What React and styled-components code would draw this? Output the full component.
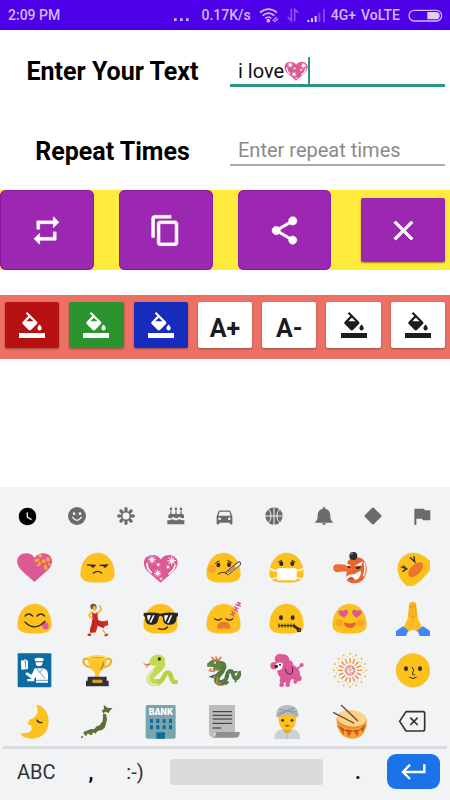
import React, { useState } from 'react'
import styled, { createGlobalStyle } from 'styled-components'
import {
  MdRepeat,
  MdContentCopy,
  MdShare,
  MdClose,
  MdWatchLater,
  MdDirectionsCar
} from 'react-icons/md'



const GlobalStyle = createGlobalStyle`
  * {
    box-sizing: border-box;
  }

  body {
    margin: 0;
    background: #fff;
    color: #000;
    font-family: Roboto, 'Noto Sans', sans-serif;
  }

  button, input {
    font-family: inherit;
  }

  button {
    border: 0;
    padding: 0;
    cursor: pointer;
  }
`

const Page = styled.div`
  min-height: 100vh;
  display: flex;
  flex-direction: column;
`

const StatusBar = styled.header`
  height: 30px;
  padding: 0 7px 0 8px;
  display: flex;
  align-items: center;
  justify-content: space-between;
  background: #4d00e8;
  color: #d3b9fb;
  font-size: 14px;
  font-weight: 500;
`

const StatusGroup = styled.div`
  display: flex;
  align-items: center;
  gap: ${props => props.$gap}px;

  svg {
    display: block;
  }
`

const Form = styled.form`
  display: flex;
  flex-direction: column;
`

const FormRow = styled.div`
  height: 80px;
  display: grid;
  grid-template-columns: 1fr 1fr;
  align-items: center;
`

const Label = styled.label`
  text-align: center;
  font-size: 25px;
  line-height: 30px;
  font-weight: bold;
  padding-top: 3px;
`

const Field = styled.div`
  height: 34px;
  margin: 0 5px;
  padding: 4px 8px 0;
  display: flex;
  align-items: center;
  align-self: end;
  margin-bottom: ${props => props.$active ? 23 : 24}px;
  border-bottom: ${props => props.$active ? '3px solid #2a9485' : '2px solid #aaa'};
`

const TextInput = styled.input`
  field-sizing: ${props => props.$fit ? 'content' : 'fixed'};
  width: ${props => props.$fit ? 'auto' : '100%'};
  border: 0;
  outline: 0;
  padding: 0;
  background: transparent;
  color: #111;
  font-size: 20px;
  line-height: 28px;

  &::placeholder {
    color: #8a8a8a;
    opacity: 1;
  }
`

const Caret = styled.span`
  width: 2px;
  height: 27px;
  background: #2a9485;
`

const Actions = styled.div`
  height: 80px;
  display: grid;
  grid-template-columns: repeat(4, 1fr);
  gap: 25px;
  background: #ffeb3b;
`

const ActionButton = styled.button`
  display: flex;
  align-items: center;
  justify-content: center;
  margin: ${props => props.$inset ? '8px 5px' : '0'};
  border-radius: ${props => props.$inset ? 2 : 6}px;
  background: #9c27b0;
  color: #fff;
  font-size: 33px;
  box-shadow: ${props => props.$inset ? '0 1px 2px rgba(0, 0, 0, .4)' : 'inset 0 0 0 1px #8d1aa2'};

  path:not([fill='none']) {
    stroke: currentColor;
    stroke-width: .5px;
  }
`

const Tools = styled.div`
  height: 64px;
  margin-top: 25px;
  padding: 7px 5px 11px;
  display: grid;
  grid-template-columns: repeat(7, 1fr);
  gap: 10px;
  background: #ec7063;
`

const ToolButton = styled.button`
  display: flex;
  align-items: center;
  justify-content: center;
  border-radius: 2px;
  background: ${props => props.$bg || '#fff'};
  color: ${props => props.$bg ? '#fff' : '#1c1c1c'};
  font-size: 25px;
  line-height: 28px;
  font-weight: bold;
  padding-top: ${props => props.$text ? 7 : 0}px;
  box-shadow: 0 1px 2px rgba(0, 0, 0, .35);
`

const Keyboard = styled.section`
  margin-top: auto;
  background: #f1f3f5;
`

const Tabs = styled.div`
  height: 56px;
  padding: 2px 3px 0;
  display: grid;
  grid-template-columns: repeat(9, 1fr);
`

const TabButton = styled.button`
  display: flex;
  align-items: center;
  justify-content: center;
  background: transparent;
  color: ${props => props.$active ? '#000' : '#6b6b6b'};
  font-size: 21px;
`

const EmojiGrid = styled.div`
  padding: 8px 6px 7px 3px;
  display: grid;
  grid-template-columns: repeat(7, 1fr);
  row-gap: 16px;
`

const EmojiButton = styled.button`
  height: 35px;
  display: flex;
  justify-content: center;
  background: transparent;
`

const Divider = styled.hr`
  height: 3px;
  margin: 0 3px;
  border: 0;
  background: #dadcdf;
`

const BottomRow = styled.div`
  height: 51px;
  padding: 0 10px 6px 17px;
  display: flex;
  align-items: center;
`

const KeyButton = styled.button`
  width: ${props => props.$width}px;
  margin-right: ${props => props.$gap || 0}px;
  flex-shrink: 0;
  background: transparent;
  color: ${props => props.$dark ? '#000' : '#303134'};
  font-size: 20px;
  line-height: 24px;
  font-weight: ${props => props.$dark ? 'bold' : 'normal'};
`

const SpaceKey = styled.button`
  flex: 1;
  height: 26px;
  margin-right: 25px;
  border-radius: 3px;
  background: #d9dadc;
`

const EnterKey = styled.button`
  width: 53px;
  height: 35px;
  flex-shrink: 0;
  display: flex;
  align-items: center;
  justify-content: center;
  border-radius: 9px;
  background: #1a73e8;
`



const YELLOW = '#fcc21b'
const INK = '#2f2a20'
const PINK = '#db5a96'
const KEYBOARD_BG = '#f1f3f5'

const FillIcon = () => (
  <svg width="26" height="26" viewBox="0 0 24 24" fill="currentColor">
    <path d="M16.56 8.94 7.62 0 6.21 1.41l2.38 2.38-5.15 5.15a1.49 1.49 0 0 0 0 2.12l5.5 5.5c.29.29.68.44 1.06.44s.77-.15 1.06-.44l5.5-5.5c.59-.58.59-1.53 0-2.12zM6.8 8.6 10 5.21 13.4 8.6zM19 11.5s-2 2.17-2 3.5c0 1.1.9 2 2 2s2-.9 2-2c0-1.33-2-3.5-2-3.5z" />
    <path d="M0 19.4h24V24H0z" />
  </svg>
)

const WifiIcon = () => (
  <svg width="20" height="16" viewBox="0 0 60 48" fill="none" stroke="#d3b9fb" strokeWidth="5">
    <path d="M3 17Q28-4 54 17M11 26Q28 11 46 26M19 34Q28 26 37 34" />
    <circle cx="28" cy="41" r="3" fill="#d3b9fb" />
    <path d="M41 42l12-12M46 45l11-10" strokeWidth="4" stroke="#b597f3" />
  </svg>
)

const DataIcon = () => (
  <svg width="12" height="14" viewBox="0 0 36 42" fill="none" stroke="#8a55ee" strokeWidth="5">
    <path d="M13 2v36L2 27M23 40V4l11 11" />
  </svg>
)

const SignalIcon = () => (
  <svg width="19" height="14" viewBox="0 0 57 42">
    <path d="M1 36h6v6H1zM12 31h6v11h-6zM23 24h6v18h-6z" fill="#e2d0fd" />
    <path d="M34 14h6v28h-6zM48 3h6v39h-6z" fill="#7d45ec" />
  </svg>
)

const BatteryIcon = () => (
  <svg width="35" height="13" viewBox="0 0 105 39">
    <rect x="3" y="4" width="98" height="32" rx="16" fill="none" stroke="#d3b9fb" strokeWidth="4" />
    <path d="M58 9h26q11 0 11 11t-11 11H58z" fill="#dfccfc" />
  </svg>
)

const EnterIcon = () => (
  <svg width="25" height="17" viewBox="0 0 75 51" fill="none" stroke="#fff" strokeWidth="7">
    <path d="M70 4v23H7M27 5 6 27l21 21" />
  </svg>
)

const FaceTab = () => (
  <svg width="18" height="18" viewBox="0 0 54 54">
    <circle cx="27" cy="27" r="27" fill="currentColor" />
    <circle cx="18" cy="20" r="4" fill={KEYBOARD_BG} />
    <circle cx="36" cy="20" r="4" fill={KEYBOARD_BG} />
    <path d="M14 31q13 18 26 0" fill="none" stroke={KEYBOARD_BG} strokeWidth="4" strokeLinecap="round" />
  </svg>
)

const FlowerTab = () => (
  <svg width="18" height="18" viewBox="0 0 54 54">
    {[0, 45, 90, 135, 180, 225, 270, 315].map(angle => (
      <ellipse key={angle} cx="27" cy="7" rx="5" ry="7" fill="currentColor" transform={`rotate(${angle} 27 27)`} />
    ))}
    <circle cx="27" cy="27" r="13" fill="none" stroke="currentColor" strokeWidth="5" />
  </svg>
)

const CakeTab = () => (
  <svg width="18" height="18" viewBox="0 0 54 54" fill="currentColor">
    <path d="M12 0q8 8 0 11-8-3 0-11zM27 0q8 8 0 11-8-3 0-11zM42 0q8 8 0 11-8-3 0-11zM10 13h4v8h11v-8h4v8h11v-8h4v8h3q4 0 4 5v6q-5 4-9 0-5-4-9 0-5 4-9 0-5-4-9 0-6 4-11 0v-6q0-5 4-5h2z" />
    <path d="M1 39q6 2 10-1 5-3 9 0 7 4 13 0 5-3 9 0 5 3 10 1v13H1z" />
  </svg>
)

const BallTab = () => (
  <svg width="18" height="18" viewBox="0 0 54 54">
    <circle cx="27" cy="27" r="26" fill="currentColor" />
    <path d="M27 0v54M0 27h54M9 5q19 22 0 44M45 5q-19 22 0 44" fill="none" stroke={KEYBOARD_BG} strokeWidth="3" />
  </svg>
)

const BellTab = () => (
  <svg width="18" height="18" viewBox="0 0 54 54" fill="currentColor">
    <path d="M27 0q4 0 4 5c11 3 15 12 15 21 0 10 2 14 7 18v3H1v-3c5-4 7-8 7-18 0-9 4-18 15-21q0-5 4-5zM21 49h12q-1 5-6 5t-6-5z" />
  </svg>
)

const DiamondTab = () => (
  <svg width="18" height="18" viewBox="0 0 54 54">
    <path d="M24 3q3-3 6 0l21 21q3 3 0 6L30 51q-3 3-6 0L3 30q-3-3 0-6z" fill="currentColor" />
  </svg>
)

const FlagTab = () => (
  <svg width="18" height="18" viewBox="0 0 54 54">
    <path d="M4 5h29l3 5h16v30H30l-3-5H10v19H4z" fill="currentColor" />
  </svg>
)

const Blob = ({ transform }) => (
  <path
    d="M53 6C25 6 2 31 2 68c0 19 13 26 51 26s50-7 50-26C103 31 81 6 53 6z"
    fill={YELLOW}
    stroke="#f5ae18"
    strokeWidth="1"
    transform={transform}
  />
)

const Eye = ({ x, y }) => <ellipse cx={x} cy={y} rx="6" ry="7" fill={INK} />

const Heart = ({ x = 0, y = 0, scale = 1, fill = PINK }) => (
  <path
    d="M52 93 13 58C-9 36 0 8 27 7c13 0 21 6 26 14C58 13 66 7 79 7c27 1 36 29 13 51z"
    fill={fill}
    transform={`translate(${x} ${y}) scale(${scale})`}
  />
)

const Sparkle = ({ x, y, r }) => (
  <g transform={`translate(${x} ${y}) scale(${r})`} stroke="#fff" strokeWidth=".22">
    <path d="M-1 0H1M0-1V1M-.75-.75.75.75M-.75.75.75-.75" />
    <circle r=".5" fill="#fff" stroke="none" />
  </g>
)

const SparklingHeart = () => (
  <>
    <Heart x={2} y={5} scale={0.97} />
    <Sparkle x={27} y={26} r={12} />
    <Sparkle x={86} y={29} r={13} />
    <Sparkle x={44} y={67} r={11} />
    <Sparkle x={46} y={41} r={6} />
    <Sparkle x={75} y={48} r={6} />
    <Sparkle x={54} y={83} r={5} />
    <path d="M12 38q0 16 13 26M96 43q-3 15-18 25" fill="none" stroke="#fff" strokeWidth="5" strokeLinecap="round" />
  </>
)

const rays = Array.from({ length: 16 }, (_, i) => i * 22.5)

const emojis = [
  {
    name: 'Heart with ribbon',
    art: <>
      <Heart />
      <g fill="#f7b02c">
        <ellipse cx="69" cy="14" rx="7" ry="5" transform="rotate(30 69 14)" />
        <ellipse cx="60" cy="28" rx="8" ry="5" transform="rotate(-8 60 28)" />
        <ellipse cx="93" cy="25" rx="7" ry="5" transform="rotate(70 93 25)" />
        <ellipse cx="86" cy="49" rx="8" ry="5" transform="rotate(75 86 49)" />
        <ellipse cx="66" cy="40" rx="8" ry="4" transform="rotate(-50 66 40)" />
        <ellipse cx="98" cy="40" rx="6" ry="3" transform="rotate(30 98 40)" />
        <circle cx="80" cy="31" r="6" />
      </g>
    </>
  },
  {
    name: 'Unamused face',
    art: <>
      <Blob />
      <path d="M23 42l23 1M60 43l23-1M40 66q13-10 25 0" fill="none" stroke={INK} strokeWidth="4" strokeLinecap="round" />
      <path d="M32 43h13q-1 8-6 7-6 0-7-7zM68 43h13q-1 8-6 7-6 0-7-7z" fill={INK} />
    </>
  },
  { name: 'Sparkling heart', art: <SparklingHeart /> },
  {
    name: 'Face with thermometer',
    art: <>
      <Blob />
      <circle cx="18" cy="54" r="13" fill="#f79b2a" opacity=".7" />
      <Eye x={37} y={42} />
      <Eye x={69} y={41} />
      <path d="M27 38q5-7 13-8M65 29q8 0 13 7M37 69q12-10 26-1" fill="none" stroke={INK} strokeWidth="3" strokeLinecap="round" />
      <path d="M66 65 99 38" stroke="#3c3a3a" strokeWidth="13" strokeLinecap="round" />
      <path d="M66 65 99 38" stroke="#f3eeea" strokeWidth="8" strokeLinecap="round" />
      <path d="M67 64 86 49" stroke="#e4794a" strokeWidth="6" strokeLinecap="round" />
    </>
  },
  {
    name: 'Face with mask',
    art: <>
      <Blob />
      <path d="M2 53q10 6 24 7M2 84q12 0 24-6M103 53q-10 6-24 7M103 84q-12 0-24-6" fill="none" stroke="#fff" strokeWidth="4" />
      <rect x="24" y="52" width="59" height="36" rx="4" fill="#fff" />
      <Eye x={37} y={38} />
      <Eye x={70} y={38} />
      <path d="M29 33l9-5M78 33l-9-5" stroke={INK} strokeWidth="3" strokeLinecap="round" />
    </>
  },
  {
    name: 'Goblin mask',
    art: <>
      <path d="M72 19c21 0 33 14 32 36-1 24-14 42-36 42-14 0-26-6-26-19l3-20c-5-22 5-39 27-39z" fill="#ea6430" />
      <path d="M58 40c-12 5-27 0-41 0-10 0-14 6-13 13 1 8 8 12 17 10 15-3 26 0 39 2z" fill="#ee6b35" />
      <path d="M41 36l17 7-15 2zM68 44l25-13-6 13zM40 82q8-14 26-12l20-11q3 12-9 26l-8 1q-9-10-18-6l-7 6z" fill="#fff" />
      <path d="M46 45l12 3-9 4zM71 48l16-3q-2 11-14 9zM50 83q8-7 18 0-9-2-18 0z" fill={INK} />
      <circle cx="64" cy="15" r="12" fill="#2b2c2e" />
      <path d="M56 12q2-5 7-5" fill="none" stroke="#999" strokeWidth="3" />
      <path d="M97 34q5 22-3 42" fill="none" stroke="#fff" strokeWidth="4" />
    </>
  },
  {
    name: 'Rolling on the floor laughing',
    art: <>
      <Blob transform="rotate(-45 53 50)" />
      <ellipse cx="62" cy="56" rx="28" ry="15" fill="#ed752d" transform="rotate(-45 62 56)" />
      <path d="M46 20l13 12-2-15M19 48l16 6-11 7M34 53l-9-8" fill="none" stroke={INK} strokeWidth="4" strokeLinecap="round" />
    </>
  },
  {
    name: 'Face savouring food',
    art: <>
      <Blob />
      <path d="M24 42q11-12 23 0M60 42q11-12 23 0" fill="none" stroke={INK} strokeWidth="4" strokeLinecap="round" />
      <path d="M73 65c4 22 23 23 22 5-1-8-10-12-17-9z" fill={PINK} />
      <path d="M24 60q29 30 60-2" fill="none" stroke={INK} strokeWidth="4" strokeLinecap="round" />
    </>
  },
  {
    name: 'Dancer',
    art: <>
      <path d="M36 28 27 40l9 10M53 34l11-12-6-13M37 82l-8 15M68 83l9 14" fill="none" stroke="#f7b52c" strokeWidth="5" strokeLinejoin="round" />
      <path d="M33 21q-6-16 7-16 14 1 8 19z" fill="#6d5544" />
      <ellipse cx="43" cy="19" rx="5" ry="8" fill="#f7b52c" />
      <path d="M36 31l9 4 7-5 2 23q14 9 29 2l2 15-10 2-4 7-8-4-10-4-5 20-17 2q-4-12 3-24 6-18 2-38z" fill="#cf2a20" />
      <path d="M39 54q6 25-7 36M50 54q4 18 18 20" fill="none" stroke="#9e1a16" strokeWidth="3" />
      <path d="M23 97l10 3M74 101l10-4" stroke="#b71c1c" strokeWidth="5" />
    </>
  },
  {
    name: 'Smiling face with sunglasses',
    art: <>
      <Blob />
      <path d="M2 33q26-4 50 2 26-6 53-2v9l-4 3c-1 15-5 23-20 23-17 0-21-7-22-24l-6-3-6 3c-1 17-6 24-22 24C10 68 7 60 6 45l-4-3z" fill="#262626" />
      <path d="M12 40h12l-7 17q-5-6-5-17zM64 40h12l-9 19q-4-7-3-19zM30 40h5L24 63l-4-3zM83 40h5L77 64l-5-2z" fill="#fff" />
      <path d="M46 80q18 6 28-5" fill="none" stroke={INK} strokeWidth="4" strokeLinecap="round" />
    </>
  },
  {
    name: 'Sleeping face',
    art: <>
      <Blob />
      <path d="M26 50q10 8 20 0M60 50q10 8 20 0" fill="none" stroke={INK} strokeWidth="4" strokeLinecap="round" />
      <path d="M33 76q0-17 20-17t20 17q0 5-7 4-13-3-26 0-7 1-7-4z" fill="#ee772c" />
      <g fill="none" stroke={PINK} strokeWidth="4">
        <path d="M73 35l10 6-4-12 9 7M81 21l12 6-6-12 11 6M88 7l14 5-7-11 10 4" />
      </g>
    </>
  },
  {
    name: 'Zipper-mouth face',
    art: <>
      <Blob />
      <Eye x={36} y={47} />
      <Eye x={71} y={47} />
      <path d="M28 71h48M30 65v12M39 65v12M48 65v12M57 65v12M66 65v12M75 65v12" stroke={INK} strokeWidth="3" />
      <path d="M75 72l14 10" stroke={INK} strokeWidth="8" strokeLinecap="round" />
      <circle cx="90" cy="84" r="7" fill={INK} />
      <circle cx="91" cy="84" r="2" fill="#aaa093" />
    </>
  },
  {
    name: 'Smiling face with heart eyes',
    art: <>
      <Blob />
      <circle cx="22" cy="63" r="11" fill="#f79b2a" opacity=".7" />
      <circle cx="86" cy="63" r="11" fill="#f79b2a" opacity=".7" />
      <g transform="rotate(-8 35 37)"><Heart x={20} y={22} scale={0.28} /></g>
      <g transform="rotate(8 74 37)"><Heart x={59} y={22} scale={0.28} /></g>
      <path d="M35 61q19 7 38-1-3 18-19 18T35 61z" fill="#ec6039" />
    </>
  },
  {
    name: 'Folded hands',
    art: <>
      <path d="M43 2q10-4 20 0l6 48 12 26-16 14q-11-13-23 0L26 75l12-25z" fill="#fbbd22" />
      <path d="M53 1v57M46 6l-2 36M61 6l2 36M43 14h19M45 44h16" fill="none" stroke="#dc941b" strokeWidth="2" />
      <path d="M3 87l21-14 16 12-7 17H3zM105 87 84 73 67 85l7 17h31z" fill="#4285f4" />
    </>
  },
  {
    name: 'Passport control',
    art: <>
      <rect x="2" y="1" width="101" height="102" rx="3" fill="#0c6b9f" />
      <g fill="#fff">
        <path d="M12 23l13-4 8 5v24l-20 2zM52 17l10-3h9l10 3-3 8H55z" />
        <path d="M56 28h21q0 12-11 12T56 28zM53 46h26q13 2 14 19v24H57V72l-9 9-23-18 4-5 15 7zM31 78h21v7H31z" />
      </g>
      <path d="M19 22l7 4M26 24v22M60 47l24 30M78 47 67 59M57 82h37" stroke="#0c6b9f" strokeWidth="2" />
    </>
  },
  {
    name: 'Trophy',
    art: <>
      <path d="M27 18C2 10 5 41 34 43M75 18c27-8 23 23-6 25" fill="none" stroke="#f3ad20" strokeWidth="7" />
      <path d="M24 12h56q2 31-18 43l-5 8 2 11H44l2-12-5-7Q22 43 24 12z" fill="#fdc525" />
      <ellipse cx="52" cy="13" rx="28" ry="7" fill="#ffda60" />
      <ellipse cx="52" cy="14" rx="21" ry="3" fill="#eaa824" />
      <path d="M70 28q0 14-9 21" fill="none" stroke="#b78024" strokeWidth="4" />
      <path d="M23 71h57v12h6v17H18V83h5z" fill="#303235" />
      <path d="M37 80h30v10H37z" fill="#d49b26" />
    </>
  },
  {
    name: 'Snake',
    art: <>
      <path d="M22 32 6 36M22 32 8 44M7 35l-5-4" fill="none" stroke="#e74b38" strokeWidth="3" />
      <path d="M52 22C64 36 50 44 37 56 10 80 20 92 45 88" fill="none" stroke="#c3d94f" strokeWidth="21" strokeLinecap="round" />
      <path d="M45 88c22-5 16-31 31-29 13 4 5 30 22 28" fill="none" stroke="#b9cf47" strokeWidth="14" strokeLinecap="round" strokeLinejoin="round" />
      <path d="M20 34C15 14 38-4 58 8c14 10 8 28-8 29-13 1-26 3-30-3z" fill="#c3d94f" />
      <path d="M29 52c-22 26-16 44 14 43" fill="none" stroke="#e5e6a5" strokeWidth="7" strokeLinecap="round" />
      <circle cx="49" cy="18" r="5" fill={INK} />
    </>
  },
  {
    name: 'Dragon',
    art: <>
      <path d="M36 32c31-3 12 25-1 37-8 19 5 25 20 17" fill="none" stroke="#587a42" strokeWidth="17" strokeLinecap="round" />
      <path d="M53 86c17-10 4-29 19-32 15 0 4 22 18 22 8-1 9-9 11-17" fill="none" stroke="#587a42" strokeWidth="12" strokeLinecap="round" />
      <path d="M4 31 17 21l18-3 12 10 1 16-13 9-15-3 3-8-20-1z" fill="#5d8644" />
      <path d="M25 22l-7-9M33 21l-3-9M38 22l6-9M15 48l-4 5 13 2 6-7M34 73l-2 16 11 3" fill="none" stroke="#e07b3f" strokeWidth="5" strokeLinecap="round" />
      <path d="M27 66l-12 5 8 3M59 68l8 4M84 58l10-2M91 82l-4 6M68 86l-9 8" fill="none" stroke="#466a34" strokeWidth="5" />
      <circle cx="27" cy="29" r="3" fill="#fff" />
    </>
  },
  {
    name: 'Poodle',
    art: <>
      <g fill={PINK}>
        <circle cx="33" cy="18" r="16" />
        <circle cx="45" cy="20" r="16" />
        <circle cx="15" cy="38" r="11" />
        <circle cx="58" cy="35" r="14" />
        <circle cx="98" cy="36" r="6" />
        <path d="M34 36q34-12 54 12 10 14 0 29l-17 1-12 5-20-4q-14-12-16-31z" />
        <circle cx="41" cy="82" r="9" />
        <circle cx="56" cy="82" r="9" />
        <circle cx="38" cy="95" r="7" />
        <circle cx="56" cy="95" r="7" />
        <circle cx="81" cy="74" r="9" />
        <circle cx="89" cy="76" r="9" />
        <circle cx="79" cy="86" r="6" />
        <path d="M82 50l14-12" stroke={PINK} strokeWidth="5" />
      </g>
      <path d="M19 35q10-12 23-3l-3 16-15 5z" fill="#fff" />
      <path d="M48 46q4 18 14 18 12-1 8-21" fill="none" stroke="#382b3b" strokeWidth="3" />
      <circle cx="22" cy="40" r="5" fill="#222" />
      <circle cx="33" cy="35" r="3" fill="#222" />
    </>
  },
  {
    name: 'Fireworks',
    art: <>
      {rays.map(angle => (
        <g key={angle} transform={`rotate(${angle} 54 52)`} strokeLinecap="round">
          <path d="M54 29V17" stroke="#f18a34" strokeWidth="4" />
          <circle cx="54" cy="3" r="3" fill="#eebc35" />
          <path d="M54 41v-4" stroke="#e4573d" strokeWidth="3" transform="rotate(11 54 52)" />
          <circle cx="54" cy="11" r="2" fill="#f3c64c" transform="rotate(11 54 52)" />
        </g>
      ))}
      <path d="M49 45l12 16M45 54l18-7M53 42l2 20" stroke="#e4573d" strokeWidth="2" strokeDasharray="4 3" />
    </>
  },
  {
    name: 'Full moon face',
    art: <>
      <circle cx="54" cy="52" r="50" fill={YELLOW} stroke="#f5b51a" strokeWidth="2" />
      <Eye x={33} y={47} />
      <Eye x={75} y={47} />
      <path d="M52 42q8 9 0 21 2 5 7 2M44 73q10 8 20 0" fill="none" stroke={INK} strokeWidth="3" strokeLinecap="round" />
    </>
  },
  {
    name: 'Crescent moon face',
    art: <>
      <path d="M58 2c22 2 38 26 37 52-1 30-21 50-49 50-18 0-32-6-37-17 15 3 29-1 35-9 3-4-4-5-1-9 3-3-1-6-7-7-5-1-4-6 0-12 4-6 16-6 22-16 6-10 4-22 0-32z" fill={YELLOW} />
      <path d="M60 48q4 10 15 7" fill="none" stroke={INK} strokeWidth="4" strokeLinecap="round" />
    </>
  },
  {
    name: 'Map of Japan',
    art: <>
      <path d="M71 2l11 9 16 2-7 6-5 8-9-4-7 5-5-8 7-5zM69 29l9 1 3 15-3 14-4 12-8 7-13 3-7 8-7-5-13 5-13 1 3-8 15-6 12-1 7-8 9-3 9-13 1-11zM14 82l10 2-5 13-6-5-3-6zM28 87l12-3-4 8-7 2zM6 95l4 2-4 6-4-1z" fill="#5d7137" />
    </>
  },
  {
    name: 'Bank',
    art: <>
      <rect x="8" y="3" width="90" height="101" rx="5" fill="#79a5af" />
      <text x="53" y="33" textAnchor="middle" fontFamily="Roboto, sans-serif" fontWeight="900" fontSize="27" fill="#fff">BANK</text>
      <path d="M21 45h9v12h-9zM40 45h9v12h-9zM59 45h9v12h-9zM78 45h9v12h-9zM21 64h9v12h-9zM40 64h9v12h-9zM59 64h9v12h-9zM78 64h9v12h-9zM40 85h26v19H40z" fill="#116b9b" />
    </>
  },
  {
    name: 'Scroll',
    art: <>
      <path d="M9 3h78v83H27l-6 15Q9 99 9 85z" fill="#bcbcbc" />
      <path d="M19 101q11-3 10-17h72q1 17-12 17z" fill="#8f8f8f" />
      <path d="M20 23h58M20 34h58M20 45h58M20 58h58M20 72h25" stroke="#2e2e2e" strokeWidth="3" />
    </>
  },
  {
    name: 'Person wearing turban',
    art: <>
      <path d="M16 105q0-29 25-29h28q24 0 24 29z" fill="#ccd1d3" />
      <path d="M42 68h24v14q-12 12-24 0z" fill="#e9a921" />
      <path d="M29 31h52q4 47-26 47T29 31z" fill={YELLOW} />
      <path d="M22 41Q19 4 55 3q36 1 33 38Q56 24 22 41z" fill="#b7bdc0" />
      <path d="M25 29q25-8 52-18M31 16q30 1 55 17M25 37q29-22 59-13" fill="none" stroke="#92999c" strokeWidth="3" />
      <circle cx="41" cy="49" r="4" fill={INK} />
      <circle cx="69" cy="49" r="4" fill={INK} />
      <path d="M49 65q6-3 12 0-6 4-12 0z" fill="#7d4a30" stroke="#7d4a30" strokeWidth="2" />
      <path d="M54 89v16" stroke="#9ba2a5" strokeWidth="2" />
    </>
  },
  {
    name: 'Drum',
    art: <>
      <path d="M14 46c0 34 16 58 48 58 30 0 42-26 42-54z" fill="#f9a32b" />
      <path d="M21 67l14 5 1 23zM41 75l19 4-9 21zM65 80l16-3-5 21zM85 74l14-12-6 24z" fill="#dc5427" />
      <path d="M16 64q10 18 44 17 33-1 42-17" fill="none" stroke="#b9512c" strokeWidth="3" />
      <ellipse cx="59" cy="47" rx="45" ry="27" fill="#e98b30" transform="rotate(6 59 47)" />
      <ellipse cx="59" cy="43" rx="44" ry="25" fill="#fbd486" transform="rotate(6 59 43)" />
      <path d="M5 26l60 31M28 4l49 46" stroke="#6b4439" strokeWidth="4" strokeLinecap="round" />
    </>
  },
  {
    name: 'Backspace',
    art: <>
      <path d="M33 23h51q5 0 5 5v48q0 5-5 5H33L14 52z" fill="none" stroke="#303134" strokeWidth="5" strokeLinejoin="round" />
      <path d="M46 41l22 22M68 41 46 63" stroke="#303134" strokeWidth="5" />
    </>
  }
]

const tabs = [
  { name: 'Recent', icon: <MdWatchLater /> },
  { name: 'Smileys', icon: <FaceTab /> },
  { name: 'Nature', icon: <FlowerTab /> },
  { name: 'Celebration', icon: <CakeTab /> },
  { name: 'Travel', icon: <MdDirectionsCar /> },
  { name: 'Sports', icon: <BallTab /> },
  { name: 'Objects', icon: <BellTab /> },
  { name: 'Symbols', icon: <DiamondTab /> },
  { name: 'Flags', icon: <FlagTab /> }
]

const actions = [
  { name: 'Repeat', icon: <MdRepeat /> },
  { name: 'Copy', icon: <MdContentCopy /> },
  { name: 'Share', icon: <MdShare /> },
  { name: 'Clear', icon: <MdClose />, inset: true }
]

const tools = [
  { name: 'Red', bg: '#b71010' },
  { name: 'Green', bg: '#2c942f' },
  { name: 'Blue', bg: '#162cbd' },
  { name: 'Increase text size', text: 'A+' },
  { name: 'Decrease text size', text: 'A-' },
  { name: 'Text colour' },
  { name: 'Background colour' }
]



const Status = () => (
  <StatusBar>
    <span>2:09 PM</span>
    <StatusGroup $gap={8}>
      <StatusGroup $gap={12}>
        <svg width="15" height="14" viewBox="0 0 45 42" fill="#d3b9fb">
          <path d="M0 31h8v8H0zM18 31h8v8h-8zM36 31h8v8h-8z" />
        </svg>
        <span>0.17K/s</span>
      </StatusGroup>
      <WifiIcon />
      <DataIcon />
      <StatusGroup $gap={5}>
        <SignalIcon />
        <span>4G+</span>
        <span>VoLTE</span>
      </StatusGroup>
      <BatteryIcon />
    </StatusGroup>
  </StatusBar>
)


const App = () => {

  const [text, setText] = useState('i love')
  const [times, setTimes] = useState('')
  const [activeTab, setActiveTab] = useState('Recent')

  return (
    <Page>
      <GlobalStyle />
      <Status />

      <Form onSubmit={e => e.preventDefault()}>
        <FormRow>
          <Label htmlFor="text">Enter Your Text</Label>
          <Field $active>
            <TextInput id="text" $fit value={text} onChange={e => setText(e.target.value)} />
            <svg width="24" height="24" viewBox="0 0 105 105"><SparklingHeart /></svg>
            <Caret />
          </Field>
        </FormRow>
        <FormRow>
          <Label htmlFor="times">Repeat Times</Label>
          <Field>
            <TextInput
              id="times"
              placeholder="Enter repeat times"
              value={times}
              onChange={e => setTimes(e.target.value)}
            />
          </Field>
        </FormRow>
      </Form>

      <Actions>
        {actions.map(action => (
          <ActionButton key={action.name} aria-label={action.name} $inset={action.inset}>
            {action.icon}
          </ActionButton>
        ))}
      </Actions>

      <Tools>
        {tools.map(tool => (
          <ToolButton key={tool.name} aria-label={tool.name} $bg={tool.bg} $text={tool.text}>
            {tool.text || <FillIcon />}
          </ToolButton>
        ))}
      </Tools>

      <Keyboard>
        <Tabs>
          {tabs.map(tab => (
            <TabButton
              key={tab.name}
              aria-label={tab.name}
              $active={tab.name === activeTab}
              onClick={() => setActiveTab(tab.name)}
            >
              {tab.icon}
            </TabButton>
          ))}
        </Tabs>
        <EmojiGrid>
          {emojis.map(emoji => (
            <EmojiButton key={emoji.name} aria-label={emoji.name}>
              <svg width="35" height="35" viewBox="0 0 105 105">{emoji.art}</svg>
            </EmojiButton>
          ))}
        </EmojiGrid>
        <Divider />
        <BottomRow>
          <KeyButton $width={38} $gap={26}>ABC</KeyButton>
          <KeyButton $width={20} $gap={24} $dark>,</KeyButton>
          <KeyButton $width={20} $gap={25}>:-)</KeyButton>
          <SpaceKey aria-label="Space" />
          <KeyButton $width={20} $gap={19} $dark>.</KeyButton>
          <EnterKey aria-label="Enter"><EnterIcon /></EnterKey>
        </BottomRow>
      </Keyboard>
    </Page>
  )

}



export default App
